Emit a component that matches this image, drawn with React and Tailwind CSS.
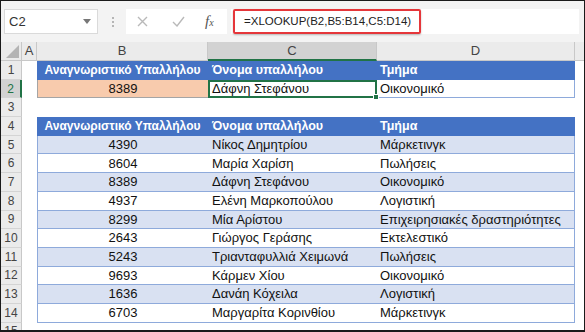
import React from "react";

const rows = [
  ["4390", "Νίκος Δημητρίου", "Μάρκετινγκ"],
  ["8604", "Μαρία Χαρίση", "Πωλήσεις"],
  ["8389", "Δάφνη Στεφάνου", "Οικονομικό"],
  ["4937", "Ελένη Μαρκοπούλου", "Λογιστική"],
  ["8299", "Μία Αρίστου", "Επιχειρησιακές δραστηριότητες"],
  ["2643", "Γιώργος Γεράσης", "Εκτελεστικό"],
  ["5243", "Τριανταφυλλιά Χειμωνά", "Πωλήσεις"],
  ["9693", "Κάρμεν Χίου", "Οικονομικό"],
  ["1636", "Δανάη Κόχειλα", "Λογιστική"],
  ["6703", "Μαργαρίτα Κορινθίου", "Μάρκετινγκ"],
];

const RowHead = ({ n, active }) => (
  <div
    className={
      "w-[21px] shrink-0 flex items-center justify-center border-b border-[#d4d4d4] text-[12px] " +
      (active
        ? "bg-[#d2d2d2] text-[#217346] border-r-2 border-r-[#217346]"
        : "bg-[#ebebeb] text-[#444] border-r border-r-[#c8c8c8]")
    }
  >
    {n}
  </div>
);

const Row = ({ n, active, children }) => (
  <div className="flex h-[18.7px]">
    <RowHead n={n} active={active} />
    <div className="w-[15px] shrink-0" />
    {children}
    <div className="flex-1" />
  </div>
);

const HeaderCells = () => (
  <>
    <div className="w-[171px] shrink-0 bg-[#4472c4] text-white font-bold text-[12px] flex items-center justify-center whitespace-nowrap">
      Αναγνωριστικό Υπαλλήλου
    </div>
    <div className="w-[169px] shrink-0 bg-[#4472c4] text-white font-bold text-[12.5px] flex items-center pl-[4px]">
      Όνομα υπαλλήλου
    </div>
    <div className="w-[198px] shrink-0 bg-[#4472c4] text-white font-bold text-[12.5px] flex items-center pl-[3px]">
      Τμήμα
    </div>
  </>
);

export default function App() {
  return (
    <div className="w-[585px] h-[332px] border border-[#1a1a1a] border-b-2 bg-white overflow-hidden font-['Liberation_Sans',sans-serif] text-[13px] text-[#111]">
      {/* formula bar */}
      <div className="h-[41px] bg-[#f3f3f3] flex items-center">
        <div className="ml-[3px] w-[94px] h-[25px] bg-white border border-[#dadada] flex items-center justify-between pl-[4px] pr-[6px] text-[#333]">
          <span>C2</span>
          <svg width="8" height="5" viewBox="0 0 8 5">
            <path d="M0 0 L8 0 L4 5 Z" fill="#777" />
          </svg>
        </div>
        <div className="ml-[14px] flex flex-col gap-[2px]">
          <div className="w-[2px] h-[2px] bg-[#b5b5b5]" />
          <div className="w-[2px] h-[2px] bg-[#b5b5b5]" />
          <div className="w-[2px] h-[2px] bg-[#b5b5b5]" />
        </div>
        <div className="ml-[12px] w-[101px] h-[25px] bg-white flex items-center">
          <svg className="ml-[11px]" width="11" height="11" viewBox="0 0 11 11">
            <path d="M1 1 L10 10 M10 1 L1 10" stroke="#b9b9b9" strokeWidth="1.4" />
          </svg>
          <svg className="ml-[24px]" width="13" height="11" viewBox="0 0 13 11">
            <path d="M1 6 L5 10 L12 1" stroke="#b9b9b9" strokeWidth="1.4" fill="none" />
          </svg>
          <span className="ml-[20px] font-['Liberation_Serif',serif] italic text-[15px] text-[#555]">
            f<span className="text-[10px]">x</span>
          </span>
        </div>
        <div className="ml-[4px] mr-[5px] flex-1 h-[25px] bg-white flex items-center">
          <div className="ml-[2px] w-[188px] h-[25px] border-2 border-[#e5363a] rounded-[2px] flex items-center pl-[9px] text-[11.5px] text-[#222] whitespace-nowrap shadow-[0_1px_2px_rgba(0,0,0,0.25)]">
            =XLOOKUP(B2,B5:B14,C5:D14)
          </div>
        </div>
      </div>

      {/* column headers */}
      <div className="flex h-[19px] bg-[#ebebeb] text-[#444] text-[13px]">
        <div className="w-[21px] shrink-0 flex items-end justify-end pr-[2px] pb-[2px] border-r border-[#c8c8c8] border-b">
          <svg width="13" height="13" viewBox="0 0 13 13">
            <path d="M13 0 L13 13 L0 13 Z" fill="#b4b4b4" />
          </svg>
        </div>
        <div className="w-[15px] shrink-0 flex items-center justify-center border-r border-b border-[#c8c8c8]">A</div>
        <div className="w-[171px] shrink-0 flex items-center justify-center border-r border-b border-[#c8c8c8]">B</div>
        <div className="w-[169px] shrink-0 flex items-center justify-center bg-[#d2d2d2] border-r border-[#c8c8c8] border-b-2 border-b-[#217346]">C</div>
        <div className="w-[198px] shrink-0 flex items-center justify-center border-r border-b border-[#c8c8c8]">D</div>
        <div className="flex-1 border-b border-[#c8c8c8]" />
      </div>

      <Row n={1}>
        <HeaderCells />
      </Row>
      <Row n={2} active>
        <div className="w-[171px] shrink-0 bg-[#f8cbad] border-l border-b border-[#a5a5a5] flex items-center justify-center">
          8389
        </div>
        <div className="w-[169px] shrink-0 relative border-2 border-[#217346] flex items-center pl-[2px]">
          Δάφνη Στεφάνου
          <div className="absolute right-[-4px] bottom-[-4px] w-[6px] h-[6px] bg-[#217346] border border-white" />
        </div>
        <div className="w-[198px] shrink-0 border-r border-b border-[#8eaadb] flex items-center pl-[3px]">
          Οικονομικό
        </div>
      </Row>
      <Row n={3} />
      <Row n={4}>
        <HeaderCells />
      </Row>
      {rows.map((r, i) => {
        const bg = i % 2 === 0 ? "bg-[#d9e1f2]" : "bg-white";
        return (
          <Row key={i} n={i + 5}>
            <div className={"w-[171px] shrink-0 border-l border-b border-[#8eaadb] flex items-center justify-center " + bg}>
              {r[0]}
            </div>
            <div className={"w-[169px] shrink-0 border-b border-[#8eaadb] flex items-center pl-[4px] " + bg}>
              {r[1]}
            </div>
            <div className={"w-[198px] shrink-0 border-r border-b border-[#8eaadb] flex items-center pl-[3px] whitespace-nowrap " + bg}>
              {r[2]}
            </div>
          </Row>
        );
      })}
      <Row n={15} />
    </div>
  );
}
